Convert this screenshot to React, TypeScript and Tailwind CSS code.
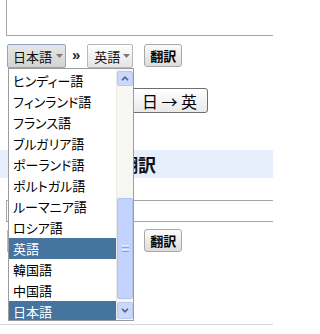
import React from "react";

const JP = "font-['Noto_Sans_CJK_JP','Noto_Sans_CJK_SC',sans-serif]";

function Caret() {
  return (
    <svg width="7" height="4" viewBox="0 0 7 4">
      <path d="M0 0H7L3.5 4Z" fill="#7a7a7a" />
    </svg>
  );
}

function Row({ focused }: { focused?: boolean }) {
  return (
    <div className="flex items-start pl-[7px]">
      <div
        className={
          focused
            ? "flex h-[24px] w-[59px] items-center rounded-[2px] border border-[#8ea3c8] bg-gradient-to-b from-[#e6e6e6] to-[#d3d3d3] pl-[5px] text-[13px] leading-none text-[#111]"
            : "flex h-[24px] w-[59px] items-center rounded-[2px] border border-[#b8b8b8] bg-gradient-to-b from-[#ffffff] to-[#e4e4e4] pl-[5px] text-[13px] leading-none text-[#111]"
        }
      >
        <span>日本語</span>
        <span className="ml-[4px] flex">
          <Caret />
        </span>
      </div>
      <span className="ml-[6px] mt-[2px] font-['Liberation_Sans',sans-serif] text-[15px] font-bold leading-[18px] text-[#222]">
        »
      </span>
      <div className="ml-[7px] flex h-[24px] w-[46px] items-center rounded-[2px] border border-[#b8b8b8] bg-gradient-to-b from-[#ffffff] to-[#e4e4e4] pl-[6px] text-[13px] leading-none text-[#111]">
        <span>英語</span>
        <span className="ml-[3px] flex">
          <Caret />
        </span>
      </div>
      <div className="ml-[11px] flex h-[23px] w-[38px] items-center justify-center rounded-[3px] border border-[#a8a8a8] bg-gradient-to-b from-[#fbfbfb] to-[#dcdcdc] text-[13px] font-bold leading-none text-black">
        翻訳
      </div>
    </div>
  );
}

function Chevron({ up }: { up?: boolean }) {
  return (
    <svg width="8" height="5" viewBox="0 0 8 5">
      <path
        d={up ? "M1 4.2L4 1.2L7 4.2" : "M1 0.8L4 3.8L7 0.8"}
        stroke="#4d6185"
        strokeWidth="1.6"
        fill="none"
      />
    </svg>
  );
}

function Scrollbar() {
  return (
    <div className="flex w-[17px] flex-col border-l border-[#ecebe5] bg-[#f7f6f2]">
      <div className="mt-[2px] flex h-[15px] items-center justify-center rounded-[2px] border border-[#b6c8f2] bg-[#cad8fb]">
        <Chevron up />
      </div>
      <div className="h-[112px]" />
      <div className="flex h-[101px] items-center justify-center rounded-[2px] border border-[#b0c3ee] bg-[#c3d3fd]">
        <div className="flex w-[7px] flex-col gap-[1px]">
          <div className="h-px bg-[#eef3ff]" />
          <div className="h-px bg-[#8fa6da]" />
          <div className="h-px bg-[#eef3ff]" />
          <div className="h-px bg-[#8fa6da]" />
        </div>
      </div>
      <div className="flex-1" />
      <div className="mb-[1px] flex h-[17px] items-center justify-center rounded-[2px] border border-[#b6c8f2] bg-[#cad8fb]">
        <Chevron />
      </div>
    </div>
  );
}

const items = [
  "ヒンディー語",
  "フィンランド語",
  "フランス語",
  "ブルガリア語",
  "ポーランド語",
  "ポルトガル語",
  "ルーマニア語",
  "ロシア語",
  "英語",
  "韓国語",
  "中国語",
  "日本語",
];

export default function App() {
  return (
    <div className={`relative h-[334px] w-[273px] overflow-hidden bg-white ${JP}`}>
      <div className="ml-[6px] h-[36px] w-[300px] border-b border-l border-[#a6a6a6] bg-white" />
      <div className="mt-[8px]">
        <Row focused />
      </div>
      <div className="ml-[131px] mt-[20px] flex h-[25px] w-[77px] items-center justify-center rounded-[3px] border border-[#6e6e6e] bg-gradient-to-b from-[#ffffff] to-[#e9e9e9] text-[16px] leading-none text-black">
        日 → 英
      </div>
      <div className="mt-[37px] flex h-[28px] items-center bg-[#e7eefb] pl-[120px] text-[18px] font-bold leading-none text-[#111]">
        翻訳
      </div>
      <div className="ml-[6px] mt-[22px] h-[22px] w-[300px] border-y border-l border-[#a6a6a6] bg-white" />
      <div className="mt-[7px]">
        <Row />
      </div>
      <div className="mt-[71px] h-px bg-[#d6d6d6]" />

      <div className="absolute left-[8px] top-[68px] flex h-[253px] w-[126px] border border-[#9c9c9c] bg-white">
        <div className="flex-1 overflow-hidden pt-[1px]">
          {items.map((t) => (
            <div
              key={t}
              className={
                t === "英語" || t === "日本語"
                  ? "flex h-[21px] items-center whitespace-nowrap bg-[#45749f] pl-[4px] text-[13px] leading-none text-white [font-feature-settings:'palt']"
                  : "flex h-[21px] items-center whitespace-nowrap pl-[4px] text-[13px] leading-none text-black [font-feature-settings:'palt']"
              }
            >
              <span>{t}</span>
            </div>
          ))}
        </div>
        <Scrollbar />
      </div>
    </div>
  );
}
